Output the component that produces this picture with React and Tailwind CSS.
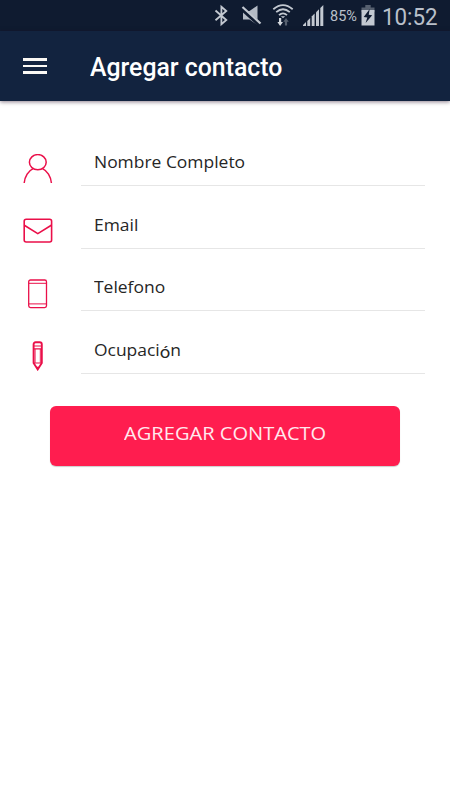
import React, { useState } from 'react';

const BluetoothIcon = () => (
  <svg className="h-[31px] w-[15px]" viewBox="0 0 15 31" fill="none" stroke="#c3c9d1" strokeWidth="1.8">
    <path d="M1.5 10.5L12.3 20L7.4 24.2V6.8L12.3 11L1.5 20.3" />
  </svg>
);

const MuteIcon = () => (
  <svg className="h-[31px] w-[21px]" viewBox="0 0 21 31">
    <path d="M2 11H8.5L16.5 5.5V25L8.5 19.5H2Z" fill="#b4bbc5" />
    <path d="M0 7.8L18.5 24.5" stroke="#0f1b30" strokeWidth="4.4" />
    <path d="M1.5 7L19.5 23.5" stroke="#c3c9d1" strokeWidth="2.2" />
  </svg>
);

const WifiIcon = () => (
  <svg className="h-[31px] w-[22px]" viewBox="0 0 22 31" fill="none" stroke="#c3c9d1" strokeWidth="1.8">
    <path d="M1.3 9.2Q11 1 20.7 9.2" />
    <path d="M4.2 12.2Q11 6.2 17.8 12.2" />
    <path d="M7 15.2Q11 11.6 15 15.2" />
    <path d="M8.8 16.2H13.2L11 18.2Z" fill="#c3c9d1" stroke="none" />
    <path d="M7 18H9.2V22H11L8.1 26L5.4 22H7Z" fill="#d3d7dc" stroke="none" />
    <path d="M12.9 25.5V21.8H11.2L14 18L16.8 21.8H15.1V25.5Z" fill="#56606f" stroke="none" />
  </svg>
);

const SignalIcon = () => (
  <svg className="h-[31px] w-[21px]" viewBox="0 0 21 31" fill="#c3c9d1">
    <path d="M0 26V25L3 22V26Z" />
    <path d="M4.3 26V21L7.2 18V26Z" />
    <path d="M8.7 26V16.6L11.6 13.6V26Z" />
    <path d="M13 26V12.3L16 9.3V26Z" />
    <path d="M17.3 26V8L20.3 5V26Z" />
  </svg>
);

const BatteryIcon = () => (
  <svg className="h-[31px] w-[14px]" viewBox="0 0 14 31">
    <path d="M4.3 5H9.7V7.4H13.5V12H.5V7.4H4.3Z" fill="#56606f" />
    <path d="M.5 10H13.5V25.5H.5Z" fill="#c3c9d1" />
    <path d="M8.7 9L2.7 17L6.3 17.5L4.6 23L11.2 15.2L7.7 14.8Z" fill="#0f1b30" />
  </svg>
);

const UserIcon = () => (
  <svg className="h-[30px] w-[30px]" viewBox="0 0 30 30" fill="none" stroke="#ea0f49" strokeWidth="1.5">
    <ellipse cx="14.8" cy="8.2" rx="8.4" ry="7.6" />
    <path d="M1.2 29C1.7 22.5 5.5 16.6 10.2 14.6M19.4 14.6C24.1 16.6 27.9 22.5 28.4 29" />
  </svg>
);

const MailIcon = () => (
  <svg className="h-[30px] w-[30px]" viewBox="0 0 30 30" fill="none" stroke="#ea0f49" strokeWidth="1.6">
    <rect x="1.2" y="3.3" width="27.4" height="22.7" rx="2" />
    <path d="M1.3 9.3L14.8 17.6L28.3 9.3" />
  </svg>
);

const PhoneIcon = () => (
  <svg className="h-[30px] w-[30px]" viewBox="0 0 30 30" fill="none" stroke="#ea0f49" strokeWidth="1.3">
    <rect x="5.7" y="1" width="17.8" height="27.6" rx="1.8" />
    <path d="M6 4.3H23.3M6 24.9H23.3" strokeWidth="1" />
  </svg>
);

const PencilIcon = () => (
  <svg className="h-[30px] w-[30px]" viewBox="0 0 30 30" fill="none" stroke="#ea0f49" strokeWidth="1.9">
    <path d="M10.6 22V3.4Q10.6 1.3 12.7 1.3H16.7Q18.8 1.3 18.8 3.4V22L14.7 28.4L10.6 22Z" />
    <path d="M10.6 5H18.8M10.6 7.8H18.8M10.6 22H18.8" strokeWidth="1.2" />
    <path d="M12.1 8V21.8M17.3 8V21.8" strokeWidth="0.9" />
    <path d="M12.9 25.8H16.5L14.7 29Z" fill="#ea0f49" stroke="none" />
  </svg>
);

const fields = [
  { id: 'nombre', icon: UserIcon, label: 'Nombre Completo' },
  { id: 'email', icon: MailIcon, label: 'Email' },
  { id: 'telefono', icon: PhoneIcon, label: 'Telefono' },
  { id: 'ocupacion', icon: PencilIcon, label: <>Ocupaci<span className="relative top-[2px] font-['Roboto',sans-serif] text-[17px] leading-none">ó</span>n</> },
];

export default function App() {
  const [active, setActive] = useState(null);

  return (
    <main className="h-[800px] w-[450px] overflow-hidden bg-white">
      <div className="flex h-[31px] items-center bg-[#0f1b30] pl-[214px] font-['Roboto',sans-serif] text-[#b9c0ca]">
        <BluetoothIcon />
        <div className="w-[12px]" />
        <MuteIcon />
        <div className="w-[10px]" />
        <WifiIcon />
        <div className="w-[9px]" />
        <SignalIcon />
        <span className="ml-[6px] w-[31px] pt-[3px] text-[14.5px] whitespace-nowrap">85%</span>
        <BatteryIcon />
        <span className="ml-[7px] origin-left scale-x-[0.95] pt-[4px] text-[23.5px] whitespace-nowrap">10:52</span>
      </div>

      <header className="flex h-[70px] items-center bg-[#12233f] pl-[23px] shadow-[0_1px_4px_rgba(30,0,30,0.5)]">
        <button className="flex w-[24px] flex-col gap-[4px]" aria-label="Menu">
          <span className="h-[2.5px] w-full bg-[#faf8f4]" />
          <span className="h-[2.5px] w-full bg-[#faf8f4]" />
          <span className="h-[2.5px] w-full bg-[#faf8f4]" />
        </button>
        <h1 className="ml-[43px] origin-left scale-x-[0.955] pt-[2px] font-['Roboto',sans-serif] text-[26px] font-medium text-white">Agregar contacto</h1>
      </header>

      <form className="pt-[34.5px]" onSubmit={(e) => e.preventDefault()}>
        {fields.map(({ id, icon: Icon, label }) => (
          <div key={id} className="flex h-[62.6px] pl-[22.5px]" onClick={() => setActive(id)}>
            <div className="pt-[18px]">
              <Icon />
            </div>
            <label
              className={`ml-[28.5px] h-[50.5px] w-[344px] border-b pl-[13px] pt-[13.7px] font-['Open_Sans',sans-serif] text-[16px] leading-[26px] text-[#262626] ${
                active === id ? 'border-[#ff1d4f]' : 'border-[#e6e6e6]'
              }`}
            >
              <span className="inline-block origin-left scale-x-[1.09]">{label}</span>
            </label>
          </div>
        ))}

        <button
          type="submit"
          className="mx-[50px] mt-[20px] flex h-[60px] w-[350px] justify-center rounded-[6px] bg-[#ff1d4f] pt-[13px] font-['Open_Sans',sans-serif] text-[18.5px] leading-[28px] text-[#ffe9ee] shadow-[0_1px_1px_rgba(0,0,0,0.2)]"
        >
          <span className="inline-block scale-x-[1.085]">AGREGAR CONTACTO</span>
        </button>
      </form>
    </main>
  );
}
